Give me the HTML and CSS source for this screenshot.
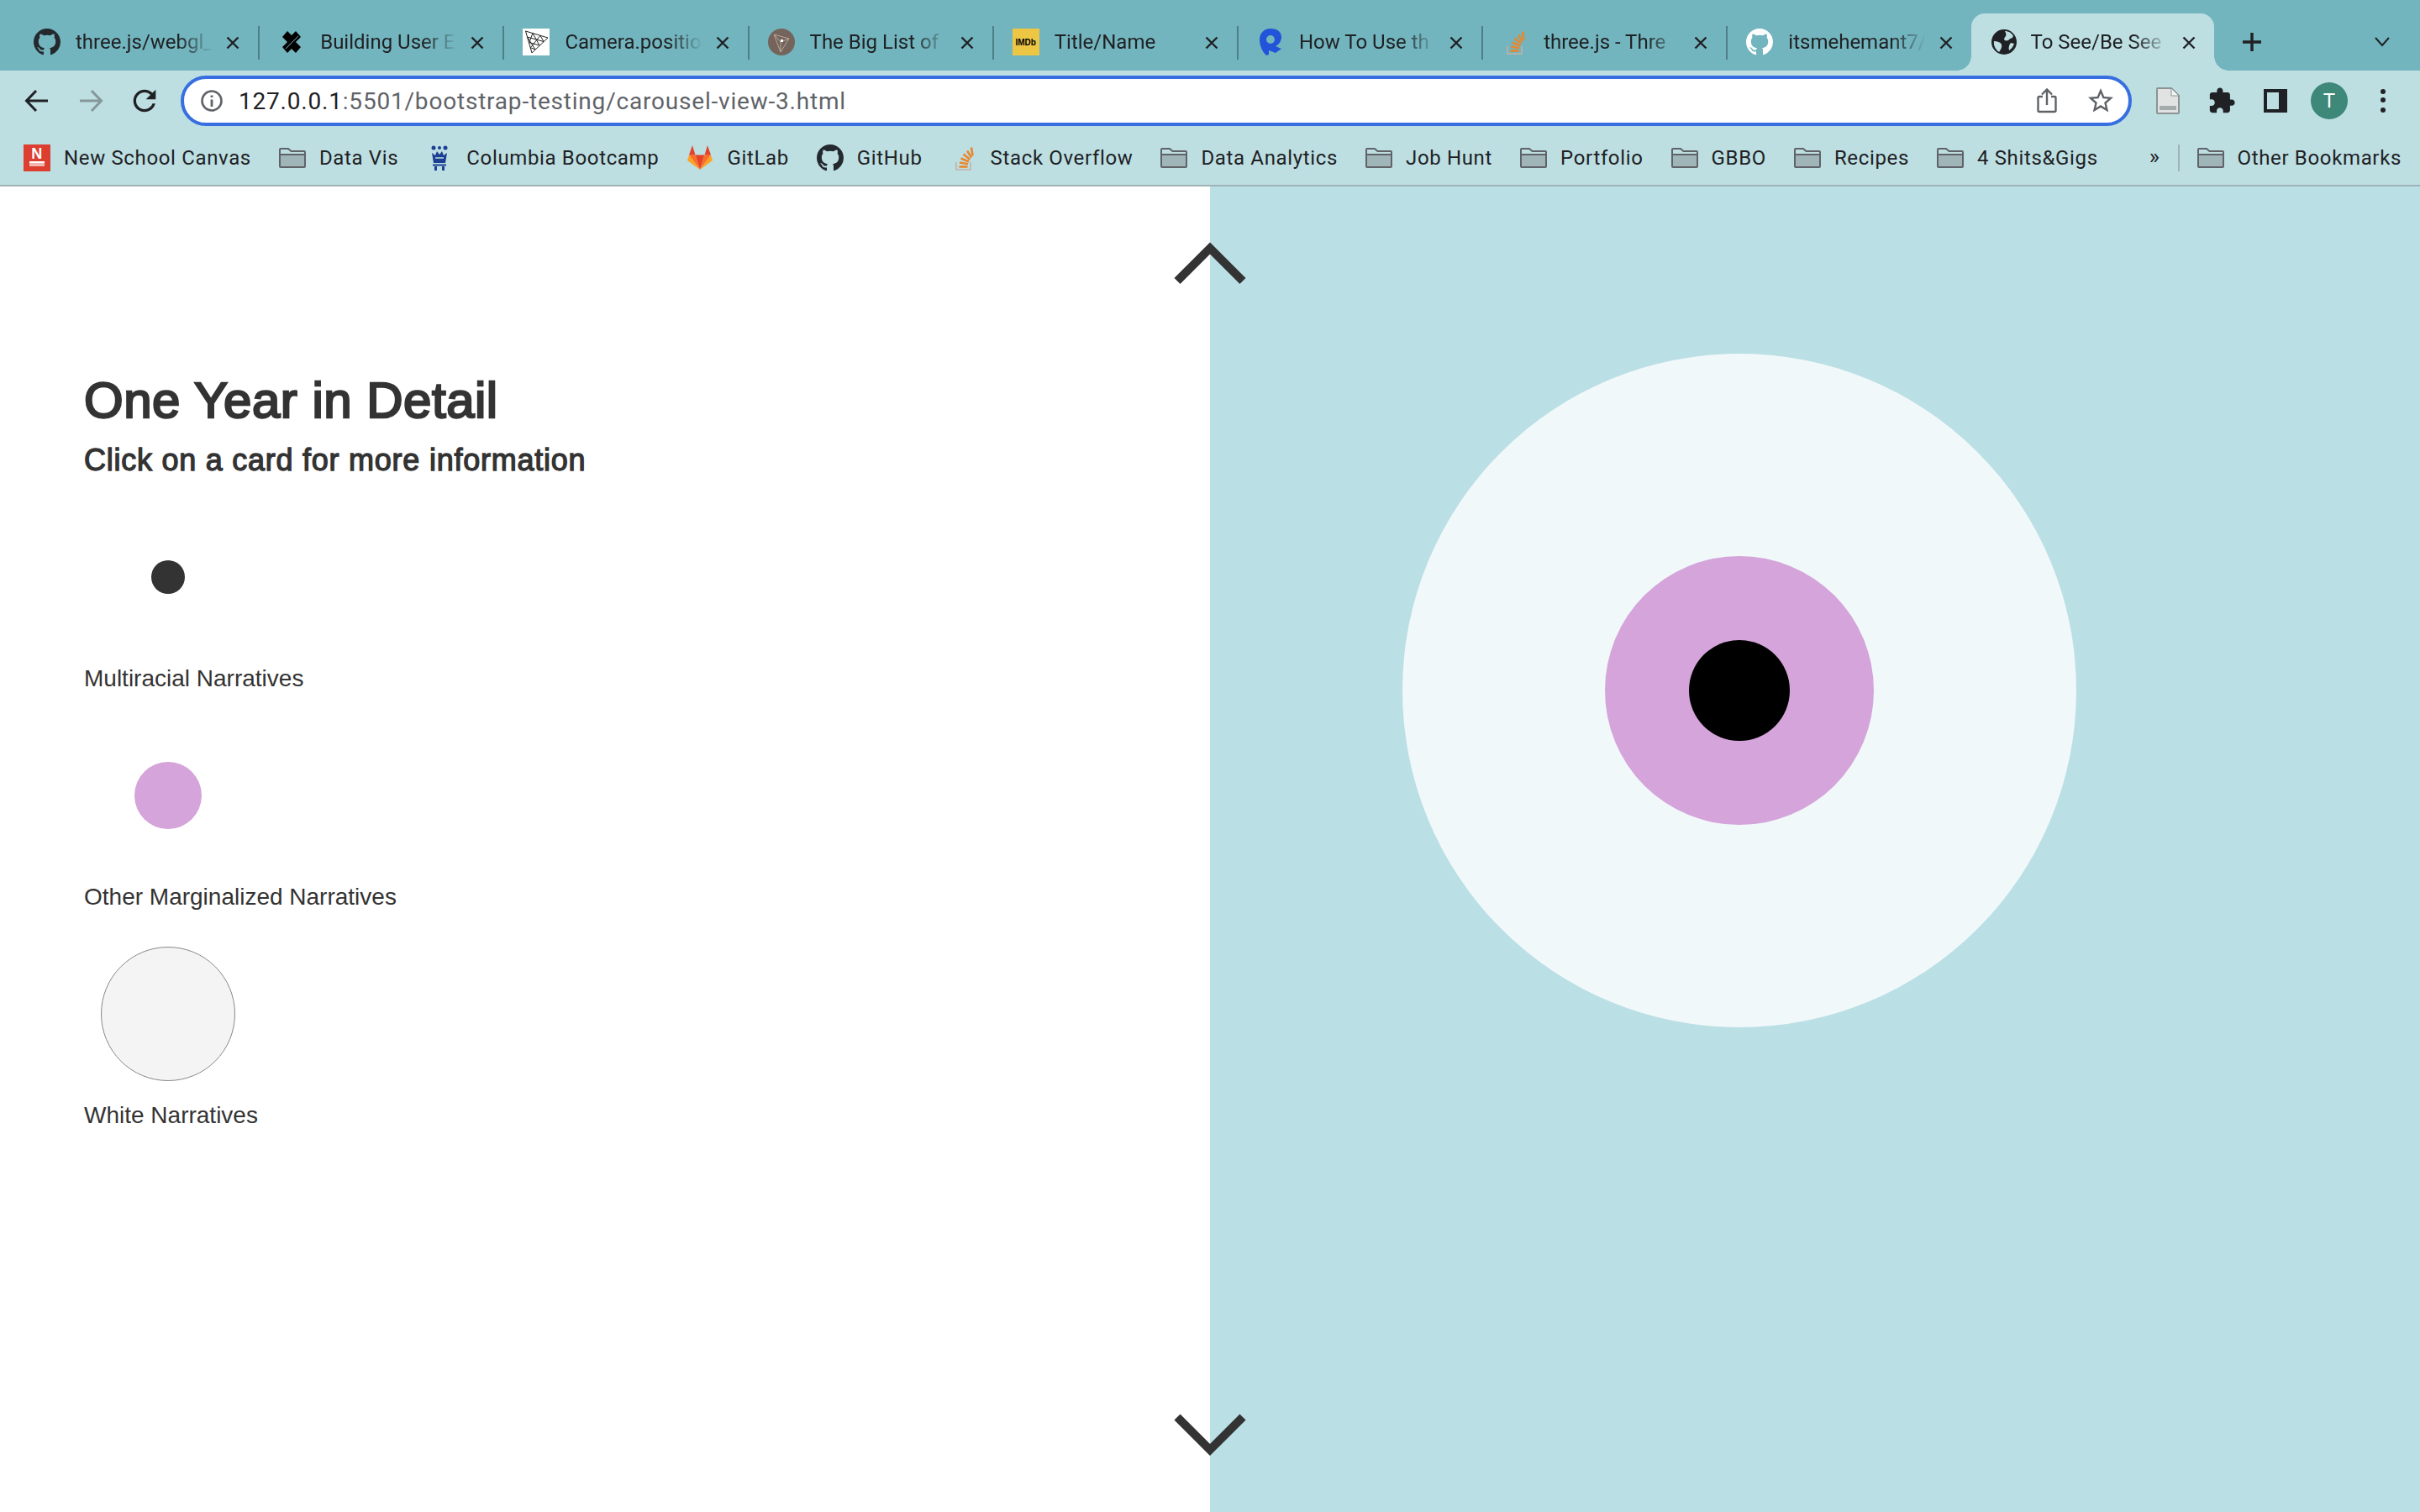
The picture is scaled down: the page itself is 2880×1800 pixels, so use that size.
FILE: index.html
```html
<!DOCTYPE html>
<html lang="en">
<head>
<meta charset="UTF-8">
<title>To See/Be Seen</title>
<link rel="stylesheet" href="styles.css">
</head>
<body>

<!-- shared icons -->
<svg class="icon-defs" width="0" height="0">
    <symbol id="ic-github" viewBox="0 0 16 16">
        <path fill="currentColor" d="M8 0C3.58 0 0 3.58 0 8c0 3.54 2.29 6.53 5.47 7.59.4.07.55-.17.55-.38 0-.19-.01-.82-.01-1.49-2.01.37-2.53-.49-2.69-.94-.09-.23-.48-.94-.82-1.13-.28-.15-.68-.52-.01-.53.63-.01 1.08.58 1.23.82.72 1.21 1.87.87 2.33.66.07-.52.28-.87.51-1.07-1.78-.2-3.64-.89-3.64-3.95 0-.87.31-1.59.82-2.15-.08-.2-.36-1.02.08-2.12 0 0 .67-.21 2.2.82.64-.18 1.32-.27 2-.27.68 0 1.36.09 2 .27 1.53-1.04 2.2-.82 2.2-.82.44 1.1.16 1.92.08 2.12.51.56.82 1.27.82 2.15 0 3.07-1.87 3.75-3.65 3.95.29.25.54.73.54 1.48 0 1.07-.01 1.93-.01 2.2 0 .21.15.46.55.38A8.013 8.013 0 0016 8c0-4.42-3.58-8-8-8z"/>
    </symbol>
    <symbol id="ic-so" viewBox="0 0 32 32">
        <path d="M7 21v9h17v-9" fill="none" stroke="#c4b2a6" stroke-width="1.600"/>
        <g stroke="#e8872e" stroke-width="2.600" fill="none">
            <path d="M10.500 26.500h10"/>
            <path d="M11 21.500l10 1.800"/>
            <path d="M12.500 16.500l9.500 4"/>
            <path d="M15.500 11.500l8 6.500"/>
            <path d="M20 7.500l5 8"/>
            <path d="M25 3.500l1.500 10"/>
        </g>
    </symbol>
    <symbol id="ic-folder" viewBox="0 0 32 24">
        <path d="M1 8h30v14a1 1 0 0 1-1 1H2a1 1 0 0 1-1-1z" fill="#a0b5b8"/>
        <path d="M1 8V2a1 1 0 0 1 1-1h9l3.500 3H30a1 1 0 0 1 1 1v17a1 1 0 0 1-1 1H2a1 1 0 0 1-1-1z M1 8h30" fill="none" stroke="#5f6368" stroke-width="2"/>
    </symbol>
    <symbol id="ic-close" viewBox="0 0 16 16">
        <path d="M1.500 1.500l13 13M14.500 1.500l-13 13" fill="none" stroke="#202124" stroke-width="2.400"/>
    </symbol>
</svg>

<header class="browser">
    <div class="tabstrip">
        <div class="tab">
            <svg class="favicon fav-dark"><use href="#ic-github"/></svg>
            <span class="tab-title">three.js/webgl_</span>
            <svg class="tab-close"><use href="#ic-close"/></svg>
        </div>
        <i class="tab-sep"></i>
        <div class="tab">
            <svg class="favicon" viewBox="0 0 32 32">
                <path d="M11 3l5 5 5-5 6 7-6 6 6 6-6 7-5-5-5 5-6-7 6-6-6-6z" fill="#000"/>
                <path d="M24 9L9 24" stroke="#72b5be" stroke-width="1"/>
            </svg>
            <span class="tab-title">Building User E</span>
            <svg class="tab-close"><use href="#ic-close"/></svg>
        </div>
        <i class="tab-sep"></i>
        <div class="tab">
            <svg class="favicon" viewBox="0 0 32 32">
                <rect width="32" height="32" fill="#fff"/>
                <path d="M3.500 3L30 11 11 29zM12 5.500L8 16 M21 8.300L9.500 22.500 M5.500 10L25 15.500 M7.500 16.500L20 20 M9 22.500L15 25 M12 5.500L20 20 M21 8.300L25 15.500 M5.500 10L15 25" fill="none" stroke="#222" stroke-width="1"/>
            </svg>
            <span class="tab-title">Camera.positio</span>
            <svg class="tab-close"><use href="#ic-close"/></svg>
        </div>
        <i class="tab-sep"></i>
        <div class="tab">
            <svg class="favicon" viewBox="0 0 32 32">
                <circle cx="16" cy="16" r="16" fill="#75645b"/>
                <path d="M7 7L25 12 15 28zM25 12L15 16 7 7M15 16l0 12" fill="none" stroke="#b7a79c" stroke-width="1"/>
                <rect x="15" y="13" width="3" height="3" fill="#fff"/>
            </svg>
            <span class="tab-title">The Big List of</span>
            <svg class="tab-close"><use href="#ic-close"/></svg>
        </div>
        <i class="tab-sep"></i>
        <div class="tab">
            <span class="favicon fav-imdb">IMDb</span>
            <span class="tab-title">Title/Name</span>
            <svg class="tab-close"><use href="#ic-close"/></svg>
        </div>
        <i class="tab-sep"></i>
        <div class="tab">
            <svg class="favicon" viewBox="0 0 32 32">
                <path fill-rule="evenodd" fill="#2154d8" d="M16 0C8 0 3 6 3 13c0 7 3 14 8 19l3-1v-5l8 3 7-5-7-3c4-2 7-6 7-11 0-6-5-10-13-10zm0 8a5 5 0 1 1 0 10 5 5 0 0 1 0-10z"/>
            </svg>
            <span class="tab-title">How To Use th</span>
            <svg class="tab-close"><use href="#ic-close"/></svg>
        </div>
        <i class="tab-sep"></i>
        <div class="tab">
            <svg class="favicon"><use href="#ic-so"/></svg>
            <span class="tab-title">three.js - Thre</span>
            <svg class="tab-close"><use href="#ic-close"/></svg>
        </div>
        <i class="tab-sep"></i>
        <div class="tab">
            <svg class="favicon fav-white"><use href="#ic-github"/></svg>
            <span class="tab-title">itsmehemant7/</span>
            <svg class="tab-close"><use href="#ic-close"/></svg>
        </div>
        <div class="tab tab-active">
            <svg class="favicon" viewBox="0 0 32 32">
                <circle cx="16" cy="16" r="15" fill="#202124"/>
                <path d="M4 15c3 0 8 1 9 4 1 3-1 6-3 9-3-2-7-7-6-13zM17 3c4 0 8 2 10 6-1 2-2 3-4 3-1 2-4 3-6 2-2-1 0-4 1-5 1-2 0-4-1-6zM24 17l4 1c-1 3-3 6-6 8-1-3 0-7 2-9z" fill="#bddfe2"/>
            </svg>
            <span class="tab-title">To See/Be See</span>
            <svg class="tab-close"><use href="#ic-close"/></svg>
        </div>
        <svg class="new-tab" viewBox="0 0 24 24"><path d="M12 1v22M1 12h22" stroke="#202124" stroke-width="3.400"/></svg>
        <svg class="tab-menu" viewBox="0 0 20 14"><path d="M2 2l8 9 8-9" fill="none" stroke="#202124" stroke-width="2"/></svg>
    </div>

    <div class="toolbar">
        <button class="tool">
            <svg viewBox="0 0 32 32" width="32" height="32"><path d="M29 16H5M15 4L3.500 16 15 28" fill="none" stroke="#202124" stroke-width="3"/></svg>
        </button>
        <button class="tool">
            <svg viewBox="0 0 32 32" width="32" height="32"><path d="M3 16h24M17 4l11.500 12L17 28" fill="none" stroke="#859799" stroke-width="3"/></svg>
        </button>
        <button class="tool">
            <svg viewBox="0 0 24 24" width="40" height="40"><path fill="#202124" d="M17.650 6.350C16.200 4.900 14.210 4 12 4c-4.420 0-7.990 3.580-7.990 8s3.570 8 7.990 8c3.730 0 6.840-2.550 7.730-6h-2.080c-.82 2.330-3.040 4-5.650 4-3.310 0-6-2.690-6-6s2.690-6 6-6c1.660 0 3.140.69 4.220 1.780L13 11h7V4l-2.350 2.350z"/></svg>
        </button>
        <div class="omnibox">
            <svg class="omni-info" viewBox="0 0 26 26" width="26" height="26">
                <circle cx="13" cy="13" r="11.500" fill="none" stroke="#5f6368" stroke-width="2.600"/>
                <path d="M13 11.500V20M13 6.500v2.600" stroke="#5f6368" stroke-width="2.800"/>
            </svg>
            <span class="url"><span class="url-host">127.0.0.1</span>:5501/bootstrap-testing/carousel-view-3.html</span>
            <button class="omni-btn">
                <svg viewBox="0 0 24 32" width="24" height="32"><path d="M7 11H3a1.500 1.500 0 0 0-1.500 1.500v15A1.500 1.500 0 0 0 3 29h18a1.500 1.500 0 0 0 1.500-1.500v-15A1.500 1.500 0 0 0 21 11h-4M12 21V3M6 8.500L12 2.500l6 6" fill="none" stroke="#5f6368" stroke-width="2.400"/></svg>
            </button>
            <button class="omni-btn">
                <svg viewBox="0 0 24 24" width="36" height="36"><path fill="#5f6368" d="M22 9.240l-7.190-.62L12 2 9.190 8.630 2 9.240l5.460 4.730L5.820 21 12 17.270 18.180 21l-1.630-7.030L22 9.240zM12 15.400l-3.760 2.270 1-4.280-3.320-2.880 4.380-.38L12 6.100l1.710 4.040 4.380.38-3.320 2.880 1 4.280L12 15.400z"/></svg>
            </button>
        </div>
        <button class="tool">
            <svg viewBox="0 0 28 32" width="28" height="32">
                <path d="M1 2a1 1 0 0 1 1-1h16l9 9v20a1 1 0 0 1-1 1H2a1 1 0 0 1-1-1z" fill="#e1e3e3" stroke="#8d9393" stroke-width="2"/>
                <path d="M18 1v9h9z" fill="#f4f5f5" stroke="#8d9393" stroke-width="1"/>
                <rect x="4" y="22" width="20" height="5" fill="#a5abab"/>
            </svg>
        </button>
        <button class="tool">
            <svg viewBox="0 0 24 24" width="34" height="34"><path fill="#202124" d="M20.500 11H19V7c0-1.100-.9-2-2-2h-4V3.500C13 2.120 11.880 1 10.500 1S8 2.120 8 3.500V5H4c-1.100 0-1.990.9-1.990 2v3.800H3.500c1.490 0 2.700 1.210 2.700 2.700s-1.210 2.700-2.700 2.700H2V20c0 1.100.9 2 2 2h3.800v-1.500c0-1.490 1.210-2.700 2.700-2.700 1.490 0 2.700 1.210 2.700 2.700V22H17c1.100 0 2-.9 2-2v-4h1.500c1.380 0 2.500-1.120 2.500-2.500S21.880 11 20.500 11z"/></svg>
        </button>
        <button class="tool">
            <svg viewBox="0 0 28 28" width="28" height="28"><path fill-rule="evenodd" fill="#202124" d="M0 0h28v28H0zM4 4v20h14V4z"/></svg>
        </button>
        <button class="tool"><span class="avatar">T</span></button>
        <button class="tool">
            <svg viewBox="0 0 6 28" width="6" height="28"><circle cx="3" cy="3" r="3" fill="#202124"/><circle cx="3" cy="13" r="3" fill="#202124"/><circle cx="3" cy="25" r="3" fill="#202124"/></svg>
        </button>
    </div>

    <nav class="bookmarks">
        <a class="bm"><span class="bm-canvas"><span class="bm-canvas-n">N</span></span>New School Canvas</a>
        <a class="bm"><svg class="bm-folder"><use href="#ic-folder"/></svg>Data Vis</a>
        <a class="bm">
            <svg class="bm-icon" viewBox="0 0 32 32">
                <g fill="#1c3f94">
                    <circle cx="9" cy="4" r="2.500"/><circle cx="16" cy="4" r="2"/><circle cx="23" cy="4" r="2.500"/>
                    <path d="M7 10l4 3 2-5 3 4 3-4 2 5 4-3-2 12H9z"/>
                    <rect x="8" y="23.500" width="16" height="2"/>
                    <path d="M10 26h3v5h-3zM19 26h3v5h-3z"/>
                </g>
                <path d="M11 16h10" stroke="#bddfe2" stroke-width="1.500"/>
            </svg>
            Columbia Bootcamp
        </a>
        <a class="bm">
            <svg class="bm-icon" viewBox="0 0 32 32">
                <path d="M16 30L10.500 12.500h11z" fill="#e24329"/>
                <path d="M16 30L10.500 12.500H3zM16 30l5.500-17.500H29z" fill="#fc6d26"/>
                <path d="M3 12.500L7 1l3.500 11.500zM29 12.500L25 1l-3.500 11.500z" fill="#e24329"/>
                <path d="M3 12.500L1 19l15 11zM29 12.500L31 19 16 30z" fill="#fca326"/>
            </svg>
            GitLab
        </a>
        <a class="bm"><svg class="bm-icon fav-dark"><use href="#ic-github"/></svg>GitHub</a>
        <a class="bm"><svg class="bm-icon"><use href="#ic-so"/></svg>Stack Overflow</a>
        <a class="bm"><svg class="bm-folder"><use href="#ic-folder"/></svg>Data Analytics</a>
        <a class="bm"><svg class="bm-folder"><use href="#ic-folder"/></svg>Job Hunt</a>
        <a class="bm"><svg class="bm-folder"><use href="#ic-folder"/></svg>Portfolio</a>
        <a class="bm"><svg class="bm-folder"><use href="#ic-folder"/></svg>GBBO</a>
        <a class="bm"><svg class="bm-folder"><use href="#ic-folder"/></svg>Recipes</a>
        <a class="bm"><svg class="bm-folder"><use href="#ic-folder"/></svg>4 Shits&amp;Gigs</a>
        <span class="bm-more">&raquo;</span>
        <i class="bm-sep"></i>
        <a class="bm"><svg class="bm-folder"><use href="#ic-folder"/></svg>Other Bookmarks</a>
    </nav>
</header>

<main class="slide">
    <section class="panel-left">
        <h1>One Year in Detail</h1>
        <h2>Click on a card for more information</h2>

        <div class="legend-item">
            <div class="legend-box"><span class="dot dot-multi"></span></div>
            <p class="legend-label">Multiracial Narratives</p>
        </div>
        <div class="legend-item">
            <div class="legend-box"><span class="dot dot-other"></span></div>
            <p class="legend-label">Other Marginalized Narratives</p>
        </div>
        <div class="legend-item">
            <div class="legend-box"><span class="dot dot-white"></span></div>
            <p class="legend-label">White Narratives</p>
        </div>
    </section>

    <section class="panel-right">
        <div class="ring ring-outer">
            <div class="ring ring-mid">
                <div class="ring ring-inner"></div>
            </div>
        </div>
    </section>

    <svg class="arrow arrow-up" viewBox="0 0 100 60"><polyline points="11,54.500 50,15.500 89,54.500"/></svg>
    <svg class="arrow arrow-down" viewBox="0 0 100 60"><polyline points="11,7 50,46 89,7"/></svg>
</main>

</body>
</html>
```

FILE: styles.css
```css
* {
    box-sizing: border-box;
}
body {
    margin: 0;
    height: 1800px;
    overflow: hidden;
    background: #fff;
    font-family: "Liberation Sans", Arial, sans-serif;
    color: #333;
}
.icon-defs {
    position: absolute;
}
button {
    border: none;
    background: none;
    padding: 0;
}

/* browser chrome */
.tabstrip {
    display: flex;
    align-items: flex-start;
    height: 84px;
    padding: 16px 0 0 18px;
    background-color: #72b5be;
    font-family: Roboto, sans-serif;
    font-size: 24px;
    color: #202124;
}
.tab {
    display: flex;
    align-items: center;
    width: 289.2px;
    height: 68px;
    padding: 0 18px 0 22px;
}
.tab-active {
    position: relative;
    width: 289.4px;
    padding-left: 23px;
    background-color: #bddfe2;
    border-radius: 16px 16px 0 0;
}
.tab-active .tab-title {
    margin-left: 16px;
}
.tab-active::before,
.tab-active::after {
    content: "";
    position: absolute;
    bottom: 0;
    width: 17px;
    height: 17px;
}
.tab-active::before {
    left: -17px;
    background: radial-gradient(circle at 0 0, #72b5be 16.5px, #bddfe2 17px);
}
.tab-active::after {
    right: -17px;
    background: radial-gradient(circle at 100% 0, #72b5be 16.5px, #bddfe2 17px);
}
.tab-sep {
    width: 2px;
    height: 40px;
    margin-top: 15px;
    background-color: #4f7f86;
}
.favicon {
    flex: none;
    width: 32px;
    height: 32px;
}
.fav-dark {
    color: #24292e;
}
.fav-white {
    color: #fff;
}
.fav-imdb {
    display: flex;
    align-items: center;
    justify-content: center;
    background-color: #edc644;
    color: #000;
    font-family: "Liberation Sans", sans-serif;
    font-size: 10px;
    font-weight: bold;
}
.tab-title {
    flex: 1;
    min-width: 0;
    margin: 0 12px 0 18px;
    overflow: hidden;
    white-space: nowrap;
    -webkit-mask-image: linear-gradient(to right, #000 75%, transparent 100%);
    mask-image: linear-gradient(to right, #000 75%, transparent 100%);
}
.tab-close {
    flex: none;
    width: 16px;
    height: 16px;
    margin: 1px 4px 0;
}
.new-tab {
    width: 24px;
    height: 24px;
    margin: 22px 0 0 33px;
}
.tab-menu {
    width: 20px;
    height: 14px;
    margin: 27px 0 0 133px;
}

.toolbar {
    display: flex;
    align-items: center;
    height: 72px;
    padding: 0 12px;
    background-color: #bddfe2;
}
.tool {
    display: flex;
    align-items: center;
    justify-content: center;
    flex: none;
    width: 64px;
    height: 60px;
}
.omnibox {
    display: flex;
    align-items: center;
    flex: 1;
    height: 60px;
    margin: 0 11px;
    padding: 0 1px 0 20px;
    border: 4px solid #376ee0;
    border-radius: 30px;
    background-color: #fff;
}
.url {
    flex: 1;
    margin-left: 19px;
    font-family: Roboto, sans-serif;
    font-size: 28px;
    letter-spacing: 0.8px;
    color: #5f6368;
}
.url-host {
    color: #202124;
}
.omni-btn {
    display: flex;
    align-items: center;
    justify-content: center;
    width: 64px;
    height: 52px;
}
.avatar {
    display: flex;
    align-items: center;
    justify-content: center;
    width: 44px;
    height: 44px;
    border-radius: 50%;
    background-color: #3d8878;
    color: #fff;
    font-family: Roboto, sans-serif;
    font-size: 24px;
}

.bookmarks {
    display: flex;
    align-items: center;
    gap: 33px;
    height: 66px;
    padding: 0 22px 0 28px;
    background-color: #bddfe2;
    border-bottom: 2px solid #9fb3b5;
    font-family: Roboto, sans-serif;
    font-size: 24px;
    letter-spacing: 0.65px;
    color: #202124;
}
.bm {
    display: flex;
    align-items: center;
    gap: 16px;
    white-space: nowrap;
}
.bm-icon {
    flex: none;
    width: 32px;
    height: 32px;
}
.bm-folder {
    flex: none;
    width: 32px;
    height: 24px;
}
.bm-canvas {
    display: flex;
    flex-direction: column;
    align-items: center;
    flex: none;
    width: 32px;
    height: 32px;
    padding-top: 3px;
    background-color: #dc3f2f;
    color: #fff;
}
.bm-canvas-n {
    height: 19px;
    width: 18px;
    border-bottom: 2px solid #fff;
    box-shadow: 0 4px 0 #f3b6af;
    text-align: center;
    font-family: "Liberation Sans", sans-serif;
    font-size: 18px;
    font-weight: bold;
    line-height: 17px;
}
.bm-more {
    margin-left: auto;
    font-size: 26px;
    margin-top: -4px;
}
.bm-sep {
    width: 2px;
    height: 32px;
    margin: 0 -12px;
    background-color: #9fb3b5;
}

/* slide */
.slide {
    position: relative;
    display: grid;
    grid-template-columns: 1fr 1fr;
    height: 1578px;
}
.panel-left {
    padding: 219px 0 0 100px;
}
.panel-right {
    display: flex;
    align-items: flex-start;
    padding: 199px 0 0 229px;
    background-color: #badfe5;
}
/* headings are a medium weight, regular outlines with a thin stroke get closest */
h1 {
    margin: 0 0 13px;
    font-size: 60px;
    line-height: 72px;
    font-weight: normal;
    letter-spacing: 0.5px;
    -webkit-text-stroke: 2.4px #333;
    color: #333;
}
h2 {
    margin: 0 0 37px;
    font-size: 36px;
    line-height: 44px;
    font-weight: normal;
    letter-spacing: 0.75px;
    -webkit-text-stroke: 1.3px #333;
    color: #333;
}
.legend-item {
    margin-bottom: 39px;
}
.legend-box {
    display: flex;
    align-items: center;
    justify-content: center;
    width: 160px;
    height: 160px;
    margin-left: 20px;
}
.dot {
    border-radius: 50%;
}
.dot-multi {
    width: 40px;
    height: 40px;
    background-color: #333;
}
.dot-other {
    width: 80px;
    height: 80px;
    background-color: #d4a4da;
}
.dot-white {
    width: 160px;
    height: 160px;
    background-color: #f4f4f4;
    border: 1px solid #888;
}
.legend-label {
    margin: 21px 0 0;
    font-size: 28px;
    line-height: 40px;
    color: #333;
}
.ring {
    display: flex;
    align-items: center;
    justify-content: center;
    border-radius: 50%;
}
.ring-outer {
    width: 802px;
    height: 802px;
    background-color: #f1f8fa;
}
.ring-mid {
    width: 320px;
    height: 320px;
    background-color: #d4a4da;
}
.ring-inner {
    width: 120px;
    height: 120px;
    background-color: #000;
}
.arrow {
    position: absolute;
    left: calc(50% - 50px);
    width: 100px;
    height: 60px;
}
.arrow polyline {
    fill: none;
    stroke: #333;
    stroke-width: 10;
}
.arrow-up {
    top: 58px;
}
.arrow-down {
    bottom: 60px;
}
```
